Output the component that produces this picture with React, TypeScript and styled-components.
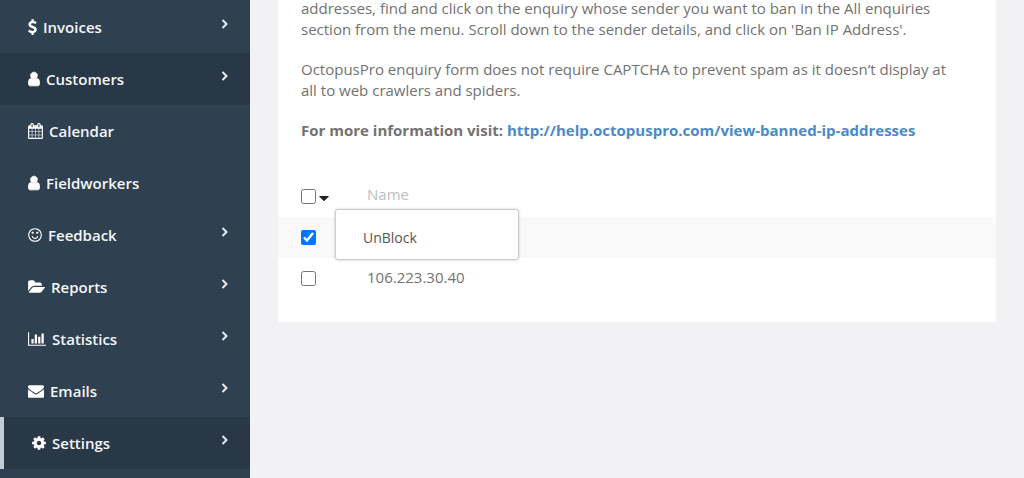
import React, { useState } from "react";
import styled, { createGlobalStyle } from "styled-components";

const GlobalStyle = createGlobalStyle`
  * { box-sizing: border-box; }
  html, body { margin: 0; padding: 0; }
  body {
    background: #f2f2f5;
    color: #727272;
    font-family: "Open Sans", "Noto Sans", sans-serif;
    font-size: 15px;
    line-height: 21px;
  }
`;

type IconShape = { box: string; width: number; stroke?: number; d: string };

const icons: Record<string, IconShape> = {
  dollar: {
    box: "384 0 1024 1792",
    width: 9,
    stroke: 50,
    d: "M1362 1185q0 153-99.5 263.5t-258.5 136.5v175q0 14-9 23t-23 9h-135q-13 0-22.5-9.5t-9.5-22.5v-175q-66-9-127.5-31t-101.5-44.5-74-48-46.5-37.5-17.5-18q-17-21-2-41l103-135q7-10 23-12 15-2 24 9l2 2q113 99 243 125 37 8 74 8 81 0 142.5-43t61.5-122q0-28-15-53t-33.5-42-58.5-37.5-66-32-80-32.5q-39-16-61.5-25t-61.5-26.5-62.5-31-56.5-35.5-53.5-42.5-43.5-49-35.5-58-21-66.5-8.5-78q0-138 98-242t255-134v-180q0-13 9.5-22.5t22.5-9.5h135q14 0 23 9t9 23v176q57 6 110.5 23t87 33.5 63.5 37.5 39 29 15 14q17 18 5 38l-81 146q-8 15-23 16-14 3-27-7-3-3-14.5-12t-39-26.5-58.5-32-74.5-26-85.5-11.5q-95 0-155 43t-60 111q0 26 8.5 48t29.5 41.5 39.5 33 56 31 60.5 27 70 27.5q53 20 81 31.5t76 35 75.5 42.5 62 50 53 63.5 31.5 76.5 13 94z",
  },
  user: {
    box: "256 0 1280 1792",
    width: 12,
    stroke: 90,
    d: "M1536 1399q0 109-62.5 187t-150.5 78h-854q-88 0-150.5-78t-62.5-187q0-85 8.5-160.5t31.5-152 58.5-131 94-89 134.5-34.5q131 128 313 128t313-128q76 0 134.5 34.5t94 89 58.5 131 31.5 152 8.5 160.5zm-256-887q0 159-112.5 271.5t-271.5 112.5-271.5-112.5-112.5-271.5 112.5-271.5 271.5-112.5 271.5 112.5 112.5 271.5z",
  },
  calendar: {
    box: "64 0 1664 1792",
    width: 15,
    d: "M192 1664h288v-288h-288v288zm352 0h320v-288h-320v288zm-352-352h288v-320h-288v320zm352 0h320v-320h-320v320zm-352-384h288v-288h-288v288zm736 736h320v-288h-320v288zm-384-736h320v-288h-320v288zm768 736h288v-288h-288v288zm-384-352h320v-320h-320v320zm-352-864v-288q0-13-9.5-22.5t-22.5-9.5h-64q-13 0-22.5 9.5t-9.5 22.5v288q0 13 9.5 22.5t22.5 9.5h64q13 0 22.5-9.5t9.5-22.5zm736 864h288v-320h-288v320zm-384-384h320v-288h-320v288zm384 0h288v-288h-288v288zm32-480v-288q0-13-9.5-22.5t-22.5-9.5h-64q-13 0-22.5 9.5t-9.5 22.5v288q0 13 9.5 22.5t22.5 9.5h64q13 0 22.5-9.5t9.5-22.5zm384-64v1280q0 52-38 90t-90 38h-1408q-52 0-90-38t-38-90v-1280q0-52 38-90t90-38h128v-96q0-66 47-113t113-47h64q66 0 113 47t47 113v96h384v-96q0-66 47-113t113-47h64q66 0 113 47t47 113v96h128q52 0 90 38t38 90z",
  },
  smile: {
    box: "128 0 1536 1792",
    width: 14,
    d: "M1262 1075q-37 121-138 195t-228 74-228-74-138-195q-8-25 4-48.5t38-31.5q25-8 48.5 4t31.5 38q25 80 92.5 129.5t151.5 49.5 151.5-49.5 92.5-129.5q8-26 32-38t49-4 37 31.5 4 48.5zm-494-435q0 53-37.5 90.5t-90.5 37.5-90.5-37.5-37.5-90.5 37.5-90.5 90.5-37.5 90.5 37.5 37.5 90.5zm512 0q0 53-37.5 90.5t-90.5 37.5-90.5-37.5-37.5-90.5 37.5-90.5 90.5-37.5 90.5 37.5 37.5 90.5zm256 256q0-130-51-248.5t-136.5-204-204-136.5-248.5-51-248.5 51-204 136.5-136.5 204-51 248.5 51 248.5 136.5 204 204 136.5 248.5 51 248.5-51 204-136.5 136.5-204 51-248.5zm128 0q0 209-103 385.5t-279.5 279.5-385.5 103-385.5-103-279.5-279.5-103-385.5 103-385.5 279.5-279.5 385.5-103 385.5 103 279.5 279.5 103 385.5z",
  },
  folder: {
    box: "64 0 1879 1792",
    width: 17,
    d: "M1943 952q0 31-31 66l-336 396q-43 51-120.5 86.5t-143.5 35.5h-1088q-34 0-60.5-13t-26.5-43q0-31 31-66l336-396q43-51 120.5-86.5t143.5-35.5h1088q34 0 60.5 13t26.5 43zm-343-344v160h-832q-94 0-197 47.5t-164 119.5l-337 396-5 6q0-4-.5-12.5t-.5-12.5v-960q0-92 66-158t158-66h320q92 0 158 66t66 158v32h544q92 0 158 66t66 158z",
  },
  chart: {
    box: "0 0 2048 1792",
    width: 18,
    d: "M640 896v512h-256v-512h256zm384-512v1024h-256v-1024h256zm1024 1152v128h-2048v-1536h128v1408h1920zm-640-896v768h-256v-768h256zm384-384v1152h-256v-1152h256z",
  },
  envelope: {
    box: "0 0 1792 1792",
    width: 16,
    d: "M1792 710v794q0 66-47 113t-113 47h-1472q-66 0-113-47t-47-113v-794q44 49 101 87 362 246 497 345 57 42 92.5 65.5t94.5 48 110 24.5h2q51 0 110-24.5t94.5-48 92.5-65.5q170-123 498-345 57-39 100-87zm0-294q0 79-49 151t-122 123q-376 261-468 325-10 7-42.5 31t-54 38.5-52 32.5-57.5 27-50 9h-2q-23 0-50-9t-57.5-27-52-32.5-54-38.5-42.5-31q-91-64-262-182.5t-205-142.5q-62-42-117-115.5t-55-136.5q0-78 41.5-130t118.5-52h1472q65 0 112.5 47t47.5 113z",
  },
  cog: {
    box: "128 0 1536 1792",
    width: 14,
    d: "M1152 896q0-106-75-181t-181-75-181 75-75 181 75 181 181 75 181-75 75-181zm512-109v222q0 12-8 23t-20 13l-185 28q-19 54-39 91 35 50 107 138 10 12 10 25t-9 23q-27 37-99 108t-94 71q-12 0-26-9l-138-108q-44 23-91 38-16 136-29 186-7 28-36 28h-222q-14 0-24.5-8.5t-11.5-21.5l-28-184q-49-16-90-37l-141 107q-10 9-25 9-14 0-25-11-126-114-165-168-7-10-7-23 0-12 8-23 15-21 51-66.5t54-70.5q-27-50-41-99l-183-27q-13-2-21-12.5t-8-23.5v-222q0-12 8-23t19-13l186-28q14-46 39-92-40-57-107-138-10-12-10-24 0-10 9-23 26-36 98.5-107.5t94.5-71.5q13 0 26 10l138 107q44-23 91-38 16-136 29-186 7-28 36-28h222q14 0 24.5 8.5t11.5 21.5l28 184q49 16 90 37l142-107q9-9 24-9 13 0 25 10 129 119 165 170 7 8 7 22 0 12-8 23-15 21-51 66.5t-54 70.5q26 50 41 98l183 28q13 2 21 12.5t8 23.5z",
  },
};

const Page = styled.div`
  display: flex;
  min-height: 100vh;
`;

const Sidebar = styled.nav`
  flex: 0 0 250px;
  padding-top: 1px;
  background: #2f4050;
`;

const NavList = styled.ul`
  margin: 0;
  padding: 0;
  list-style: none;
`;

const NavLink = styled.a<{ $shaded?: boolean; $current?: boolean }>`
  display: flex;
  align-items: center;
  gap: 6px;
  height: 52px;
  padding: 0 22px 0 28px;
  border-left: ${(p) => (p.$current ? "4px solid #c3cdd6" : "0")};
  background: ${(p) => (p.$shaded ? "#293846" : "transparent")};
  color: #f4f6f8;
  font-weight: 600;
  text-decoration: none;
`;

const NavLabel = styled.span`
  flex: 1;
`;

const NavIcon = styled.svg`
  flex: none;
  height: 16px;
  fill: #ffffff;
  stroke: #ffffff;
`;

const Chevron = styled.svg`
  flex: none;
  width: 7px;
  height: 10px;
  margin-bottom: 6px;
  fill: none;
  stroke: #e6eaee;
  stroke-width: 2;
`;

const Main = styled.main`
  flex: 1;
  min-width: 0;
  padding: 0 28px 28px;
`;

const Card = styled.section`
  margin-top: -2px;
  padding-bottom: 23px;
  background: #ffffff;
`;

const Prose = styled.div`
  display: flex;
  flex-direction: column;
  gap: 19px;
  padding: 0 38px 35px 23px;
`;

const Paragraph = styled.p`
  margin: 0;
`;

const HelpLine = styled.p`
  margin: 0;
  font-weight: 700;
`;

const HelpLink = styled.a`
  color: #4a8ac6;
  text-decoration: none;
`;

const IpTable = styled.table`
  width: 100%;
  border-collapse: collapse;
`;

const Row = styled.tr<{ $striped?: boolean }>`
  height: 41px;
  background: ${(p) => (p.$striped ? "#f9f9f9" : "transparent")};
`;

const SelectHead = styled.th`
  width: 89px;
  padding: 0 0 0 23px;
  font-weight: 400;
`;

const NameHead = styled.th`
  padding: 0 0 4px;
  color: #bcbec2;
  font-weight: 400;
  text-align: left;
`;

const Cell = styled.td`
  padding: 0 0 2px;
`;

const SelectCell = styled.td`
  padding: 0 0 0 23px;
`;

const SelectTools = styled.div`
  position: relative;
  display: flex;
  align-items: center;
  gap: 3px;
`;

const Tick = styled.input`
  display: block;
  width: 15px;
  height: 15px;
  margin: 0;
`;

const CaretButton = styled.button`
  display: block;
  padding: 3px 0 0;
  border: 0;
  background: none;
`;

const Caret = styled.svg`
  display: block;
  width: 10px;
  height: 5px;
  fill: #222222;
`;

const Menu = styled.div`
  position: absolute;
  top: 20px;
  left: 34px;
  z-index: 1;
  width: 184px;
  padding: 12px 0 6px;
  border: 1px solid #cccccc;
  border-radius: 3px;
  background: #ffffff;
  box-shadow: 0 0 3px rgba(0, 0, 0, 0.2);
`;

const MenuItem = styled.button`
  display: block;
  width: 100%;
  padding: 5px 27px;
  border: 0;
  background: none;
  color: #555555;
  font: inherit;
  font-size: 14px;
  line-height: 21px;
  text-align: left;
`;

type NavEntry = { label: string; icon: string; expandable?: boolean; shaded?: boolean; current?: boolean };

const entries: NavEntry[] = [
  { label: "Invoices", icon: "dollar", expandable: true },
  { label: "Customers", icon: "user", expandable: true, shaded: true },
  { label: "Calendar", icon: "calendar" },
  { label: "Fieldworkers", icon: "user" },
  { label: "Feedback", icon: "smile", expandable: true },
  { label: "Reports", icon: "folder", expandable: true },
  { label: "Statistics", icon: "chart", expandable: true },
  { label: "Emails", icon: "envelope", expandable: true },
  { label: "Settings", icon: "cog", expandable: true, shaded: true, current: true },
];

function NavItem({ entry }: { entry: NavEntry }) {
  const icon = icons[entry.icon];
  return (
    <li>
      <NavLink href="#" $shaded={entry.shaded} $current={entry.current} aria-current={entry.current ? "page" : undefined}>
        <NavIcon viewBox={icon.box} width={icon.width} strokeWidth={icon.stroke ?? 0} aria-hidden="true">
          <path d={icon.d} />
        </NavIcon>
        <NavLabel>{entry.label}</NavLabel>
        {entry.expandable && (
          <Chevron viewBox="0 0 7 10" aria-hidden="true">
            <path d="M1.5 1 5.5 5l-4 4" />
          </Chevron>
        )}
      </NavLink>
    </li>
  );
}

export default function App() {
  const [selected, setSelected] = useState([true, false]);
  const [menuOpen, setMenuOpen] = useState(true);
  const toggle = (index: number) => setSelected(selected.map((v, i) => (i === index ? !v : v)));
  const all = selected.every(Boolean);

  return (
    <Page>
      <GlobalStyle />
      <Sidebar aria-label="Main menu">
        <NavList>
          {entries.map((entry) => (
            <NavItem key={entry.label} entry={entry} />
          ))}
        </NavList>
      </Sidebar>
      <Main>
        <Card>
          <Prose>
            <Paragraph>
              addresses, find and click on the enquiry whose sender you want to ban in the All enquiries section from
              the menu. Scroll down to the sender details, and click on 'Ban IP Address'.
            </Paragraph>
            <Paragraph>
              OctopusPro enquiry form does not require CAPTCHA to prevent spam as it doesn’t display at all to web
              crawlers and spiders.
            </Paragraph>
            <HelpLine>
              For more information visit:{" "}
              <HelpLink href="#">http://help.octopuspro.com/view-banned-ip-addresses</HelpLink>
            </HelpLine>
          </Prose>
          <IpTable>
            <thead>
              <Row>
                <SelectHead>
                  <SelectTools>
                    <Tick
                      type="checkbox"
                      aria-label="Select all"
                      checked={all}
                      onChange={() => setSelected(selected.map(() => !all))}
                    />
                    <CaretButton
                      type="button"
                      aria-label="Bulk actions"
                      aria-expanded={menuOpen}
                      onClick={() => setMenuOpen(!menuOpen)}
                    >
                      <Caret viewBox="0 0 10 5" aria-hidden="true">
                        <path d="M.6 0h8.8q.6.2.2.8L5.5 4.7q-.5.4-1 0L.4.8Q0 .2.6 0z" />
                      </Caret>
                    </CaretButton>
                    {menuOpen && (
                      <Menu>
                        <MenuItem type="button">UnBlock</MenuItem>
                      </Menu>
                    )}
                  </SelectTools>
                </SelectHead>
                <NameHead>Name</NameHead>
              </Row>
            </thead>
            <tbody>
              <Row $striped>
                <SelectCell>
                  <Tick type="checkbox" aria-label="Select first address" checked={selected[0]} onChange={() => toggle(0)} />
                </SelectCell>
                <Cell />
              </Row>
              <Row>
                <SelectCell>
                  <Tick type="checkbox" aria-label="Select 106.223.30.40" checked={selected[1]} onChange={() => toggle(1)} />
                </SelectCell>
                <Cell>106.223.30.40</Cell>
              </Row>
            </tbody>
          </IpTable>
        </Card>
      </Main>
    </Page>
  );
}
